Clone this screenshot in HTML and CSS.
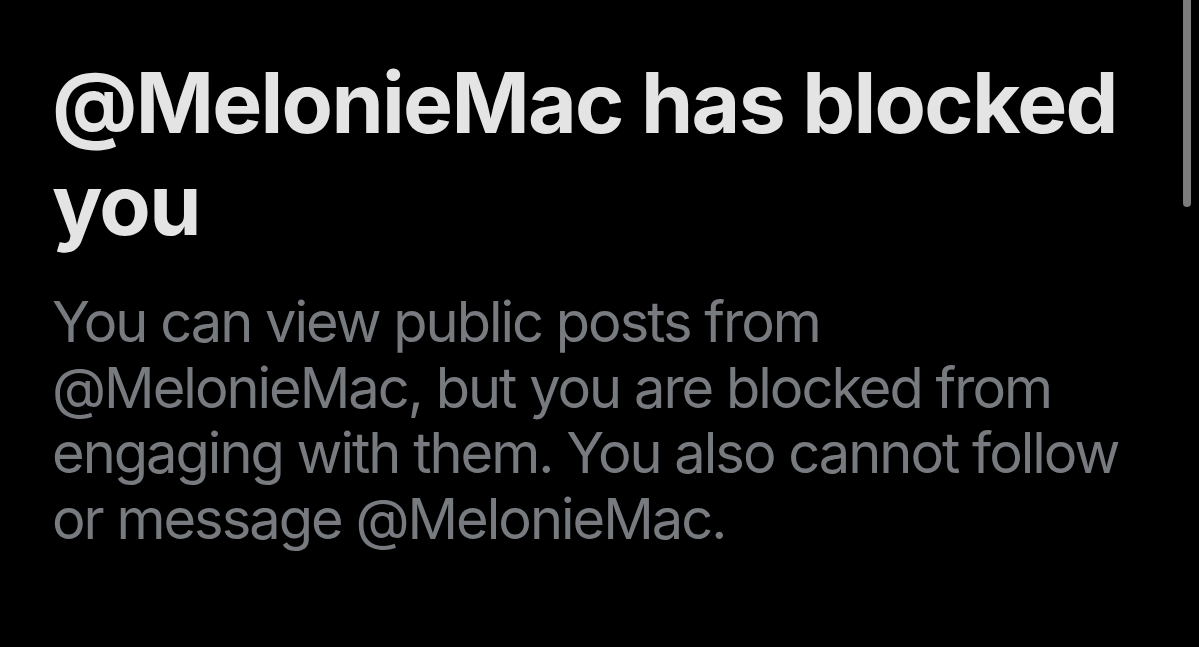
FILE: index.html
```html
<!DOCTYPE html>
<html lang="en">
<head>
<meta charset="utf-8">
<title>Blocked</title>
<link rel="stylesheet" href="styles.css">
</head>
<body>
<main class="screen">
  <div class="content">
    <h1 class="title">@MelonieMac has blocked<br>you</h1>
    <p class="desc">You can view public posts from<br>@MelonieMac, but you are blocked from<br>engaging with them. You also cannot follow<br>or message @MelonieMac.</p>
  </div>
  <div class="scrollbar"></div>
</main>
</body>
</html>
```

FILE: styles.css
```css
html, body {
  margin: 0;
  padding: 0;
  background: #000;
}

.screen {
  position: relative;
  width: 1199px;
  height: 647px;
  overflow: hidden;
  background: #000;
}

.content {
  padding: 52px 0 0 52px;
  display: flex;
  flex-direction: column;
  gap: 34px;
}

.title {
  margin: 0;
  font-family: Inter, "Liberation Sans", sans-serif;
  font-weight: 700;
  font-size: 84px;
  line-height: 102px;
  letter-spacing: -1.7px;
  color: #e4e4e4;
  white-space: nowrap;
}

.desc {
  margin: 0;
  font-family: Inter, "Liberation Sans", sans-serif;
  font-weight: 400;
  font-size: 56px;
  line-height: 65.5px;
  letter-spacing: -2px;
  color: #777a7e;
  white-space: nowrap;
}

.scrollbar {
  position: absolute;
  top: 0;
  right: 8px;
  width: 8px;
  height: 207px;
  border-radius: 0 0 4px 4px;
  background: #7c7c7c;
}
```
